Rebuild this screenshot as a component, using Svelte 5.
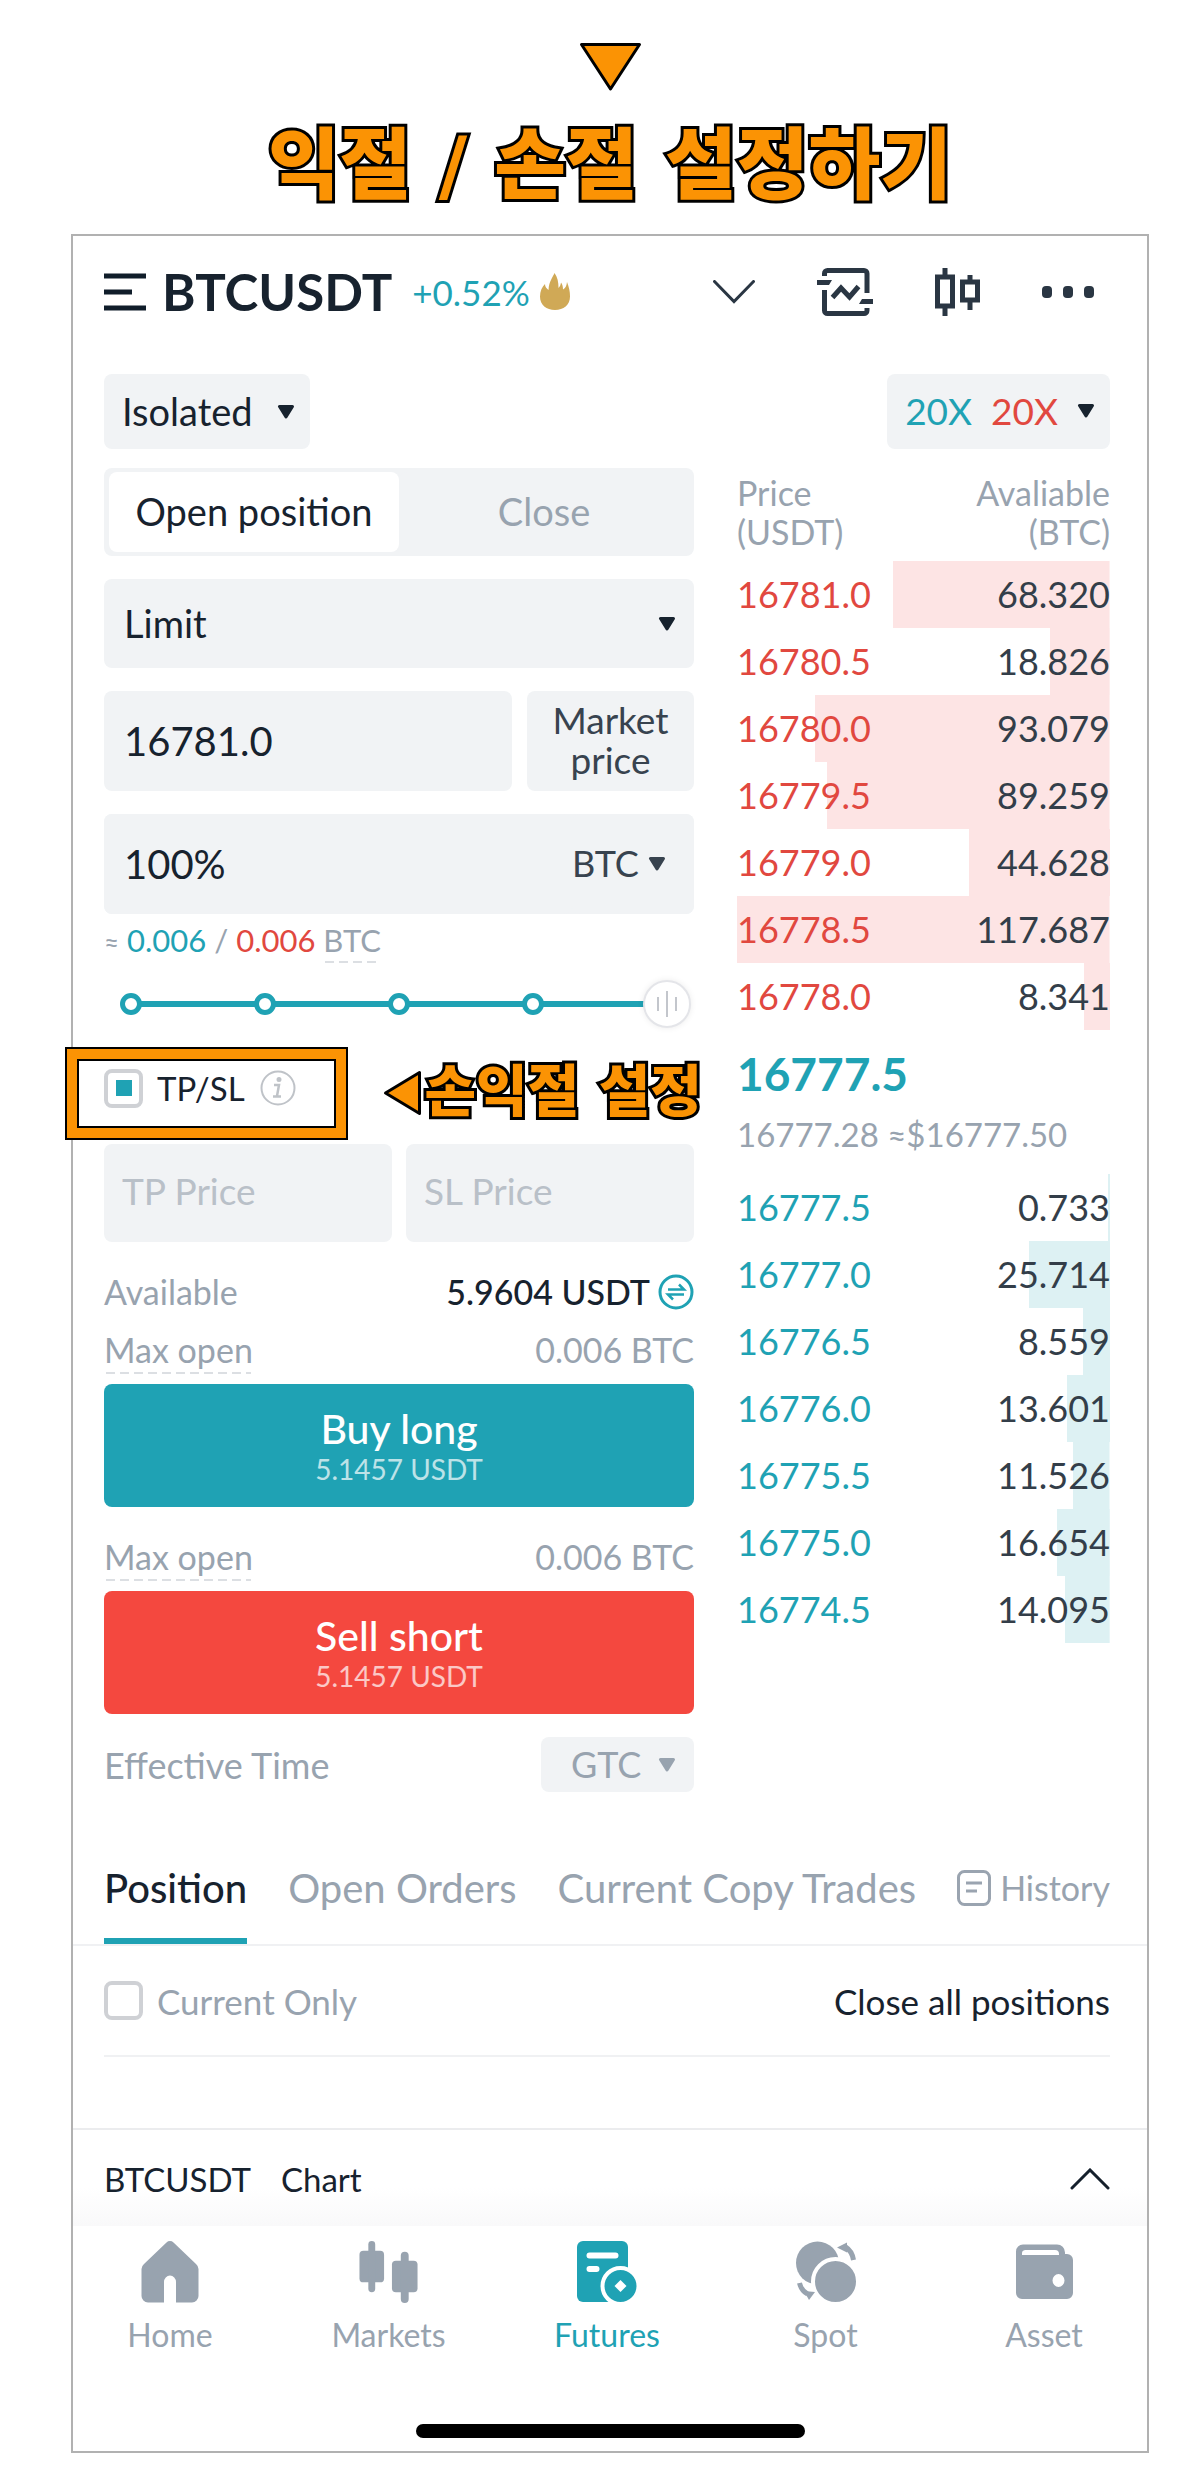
<script lang="ts">
  type Level = { price: string; amount: string };

  const asks: Level[] = [
    { price: "16781.0", amount: "68.320" },
    { price: "16780.5", amount: "18.826" },
    { price: "16780.0", amount: "93.079" },
    { price: "16779.5", amount: "89.259" },
    { price: "16779.0", amount: "44.628" },
    { price: "16778.5", amount: "117.687" },
    { price: "16778.0", amount: "8.341" },
  ];
  const bids: Level[] = [
    { price: "16777.5", amount: "0.733" },
    { price: "16777.0", amount: "25.714" },
    { price: "16776.5", amount: "8.559" },
    { price: "16776.0", amount: "13.601" },
    { price: "16775.5", amount: "11.526" },
    { price: "16775.0", amount: "16.654" },
    { price: "16774.5", amount: "14.095" },
  ];
  const maxAmount = Math.max(...[...asks, ...bids].map((l) => Number(l.amount)));
  const depth = (l: Level) => (Number(l.amount) / maxAmount) * 100;

  let price = $state("16781.0");
  let amount = $state("100%");
  let percent = $state(100);
  let tpsl = $state(true);
  let currentOnly = $state(false);
  let side = $state("open");
</script>

{#snippet caret()}
  <svg class="caret" viewBox="0 0 18 14" aria-hidden="true">
    <path d="M2.5 1.5h13L9 12z" fill="currentColor" stroke="currentColor" stroke-width="3" stroke-linejoin="round" />
  </svg>
{/snippet}

{#snippet levels(rows: Level[], kind: string)}
  <tbody class={kind}>
    {#each rows as level}
      <tr style="--depth: {depth(level)}%">
        <td class="price">{level.price}</td>
        <td class="amount">{level.amount}</td>
      </tr>
    {/each}
  </tbody>
{/snippet}

<main>
  <header class="title">
    <svg width="63" height="50" viewBox="0 0 63 50" aria-hidden="true">
      <path d="M2.5 2.5h58L31.500 47z" fill="#fb9304" stroke="#000" stroke-width="3" stroke-linejoin="round" />
    </svg>
    <h1 class="outlined">익절 / 손절 설정하기</h1>
  </header>

  <section class="phone">
    <div class="topbar">
      <button class="plain" aria-label="Menu">
        <svg width="42" height="38" viewBox="0 0 42 38">
          <path d="M0 3h42M0 19h28M0 35h42" stroke="#101d2a" stroke-width="5" />
        </svg>
      </button>
      <h2>BTCUSDT</h2>
      <span class="change">+0.52%</span>
      <svg width="30" height="38" viewBox="0 0 30 38" aria-hidden="true">
        <path d="M14.500 0C13 4 9 8 8.500 17 6.500 15.500 5 14 5 11 2 14 0 18 0 23.500 0 32 6.500 37 15 37s15-5 15-13.500c0-5-1-9.500-3-14.500-.5 4-1.500 6-4 7.500 0-3-.5-5-2-7-.5 2.500-1 4-2.500 5.500C18.500 9 17.500 4 14.500 0z" fill="#d0a956" />
      </svg>
      <div class="tools">
        <button class="plain" aria-label="Expand">
          <svg width="42" height="24" viewBox="0 0 42 24">
            <path d="M1.500 1.500L21 21.500 40.500 1.500" fill="none" stroke="#2a3643" stroke-width="3" stroke-linecap="round" />
          </svg>
        </button>
        <button class="plain" aria-label="Chart">
          <svg width="56" height="48" viewBox="0 0 56 48">
            <g fill="none" stroke="#2a3643" stroke-width="5">
              <path d="M7.500 8V5.500a3 3 0 013-3H47a3 3 0 013 3V25" />
              <path d="M7.500 22v20.500a3 3 0 003 3H47a3 3 0 003-3V40" />
              <path d="M15.500 29.500L24 20l8.500 9L41.500 18.500" />
            </g>
            <path d="M0 12h15l-3 5H0zM56 31H45l-3 5h14z" fill="#2a3643" />
          </svg>
        </button>
        <button class="plain" aria-label="Candles">
          <svg width="45" height="48" viewBox="0 0 45 48">
            <path d="M2.500 9h15v29h-15zM10 0v8M10 39v9M27.500 14h15v18h-15zM35 7v6M35 33v9" fill="none" stroke="#2a3643" stroke-width="5" />
          </svg>
        </button>
        <button class="plain" aria-label="More">
          <svg width="52" height="12" viewBox="0 0 52 12" fill="#2a3643">
            <rect width="10" height="12" rx="4" /><rect x="21" width="10" height="12" rx="4" /><rect x="42" width="10" height="12" rx="4" />
          </svg>
        </button>
      </div>
    </div>

    <div class="modes">
      <div class="select mode">
        <select aria-label="Margin mode"><option>Isolated</option><option>Cross</option></select>
        {@render caret()}
      </div>
      <button class="leverage">
        <span class="long">20X</span>
        <span class="short">20X</span>
        {@render caret()}
      </button>
    </div>

    <div class="trade">
      <form class="order" onsubmit={(e) => e.preventDefault()}>
        <div class="sides">
          <button type="button" class:active={side === "open"} onclick={() => (side = "open")}>Open position</button>
          <button type="button" class:active={side === "close"} onclick={() => (side = "close")}>Close</button>
        </div>
        <div class="select type">
          <select aria-label="Order type"><option>Limit</option><option>Market</option></select>
          {@render caret()}
        </div>
        <div class="price-row">
          <input type="text" aria-label="Price" bind:value={price} />
          <button type="button">Market price</button>
        </div>
        <div class="amount-row">
          <input type="text" aria-label="Amount" bind:value={amount} />
          <div class="select unit">
            <select aria-label="Unit"><option>BTC</option><option>USDT</option></select>
            {@render caret()}
          </div>
        </div>

        <p class="approx">
          <small>≈</small> <span class="long">0.006</span> / <span class="short">0.006</span>
          <span class="hint">BTC</span>
        </p>

        <div class="slider">
          <input type="range" aria-label="Percent of balance" min="0" max="100" bind:value={percent} />
          <div class="ticks"><i></i><i></i><i></i><i></i><b></b></div>
        </div>

        <div class="tpsl">
          <label>
            <input type="checkbox" bind:checked={tpsl} />
            TP/SL
          </label>
          <button type="button" class="plain" aria-label="About TP/SL">
            <svg width="36" height="36" viewBox="0 0 36 36" fill="none" stroke="#bfc3c8" stroke-width="2">
              <circle cx="18" cy="18" r="16.500" />
              <circle cx="19" cy="9.500" r="1.500" fill="#bfc3c8" />
              <path d="M14 15h5l-2 11M13 26.500h8" stroke-width="2.500" />
            </svg>
          </button>
          <div class="callout"></div>
          <svg class="pointer" width="39" height="46" viewBox="0 0 39 46" aria-hidden="true">
            <path d="M2.500 23L36.500 2.500v41z" fill="#fb9304" stroke="#000" stroke-width="3" stroke-linejoin="round" />
          </svg>
          <strong class="outlined">손익절 설정</strong>
        </div>

        <div class="targets">
          <input type="text" aria-label="TP Price" placeholder="TP Price" />
          <input type="text" aria-label="SL Price" placeholder="SL Price" />
        </div>

        <div class="line">
          <span>Available</span>
          <span class="balance">5.9604 USDT
            <button type="button" class="plain" aria-label="Transfer">
              <svg width="36" height="36" viewBox="0 0 36 36" fill="none" stroke="#1fa2b4" stroke-width="3">
                <circle cx="18" cy="18" r="16" />
                <path d="M10 15.500h16l-5-5M26 20.500H10l5 5" stroke-width="2.500" />
              </svg>
            </button>
          </span>
        </div>
        <div class="line max"><span class="hint">Max open</span><span>0.006 BTC</span></div>
        <button class="submit buy">Buy long<small>5.1457 USDT</small></button>
        <div class="line max second"><span class="hint">Max open</span><span>0.006 BTC</span></div>
        <button class="submit sell">Sell short<small>5.1457 USDT</small></button>
        <div class="line effective">
          <label for="tif">Effective Time</label>
          <div class="select tif">
            <select id="tif"><option>GTC</option><option>IOC</option><option>FOK</option></select>
            {@render caret()}
          </div>
        </div>
      </form>

      <div class="book">
        <table>
          <thead>
            <tr><th>Price<br />(USDT)</th><th class="amount">Avaliable<br />(BTC)</th></tr>
          </thead>
          {@render levels(asks, "asks")}
          <tbody>
            <tr>
              <td colspan="2" class="last">
                <strong>16777.5</strong>
                <span>16777.28 ≈$16777.50</span>
              </td>
            </tr>
          </tbody>
          {@render levels(bids, "bids")}
        </table>
      </div>
    </div>

    <div class="tabs">
      <a href="#position" class="current">Position</a>
      <a href="#orders">Open Orders</a>
      <a href="#copy">Current Copy Trades</a>
      <a href="#history" class="history">
        <svg width="34" height="36" viewBox="0 0 34 36" fill="none" stroke="#9aa4b0" stroke-width="3">
          <rect x="1.500" y="1.500" width="31" height="33" rx="6" />
          <path d="M9 13h16M9 21h11" />
        </svg>
        History
      </a>
    </div>

    <div class="filter">
      <label>
        <input type="checkbox" bind:checked={currentOnly} />
        Current Only
      </label>
      <button class="plain">Close all positions</button>
    </div>

    <button class="chart-bar">
      <span>BTCUSDT</span><span>Chart</span>
      <svg width="40" height="22" viewBox="0 0 40 22" aria-hidden="true">
        <path d="M2 20L20 2l18 18" fill="none" stroke="#15202c" stroke-width="3" stroke-linecap="round" />
      </svg>
    </button>

    <nav>
      <a href="#home">
        <svg width="58" height="62" viewBox="0 0 58 62" fill="currentColor">
          <path d="M25.500 1.500a5 5 0 017 0L55 23a7 7 0 012.500 5V55a6.500 6.500 0 01-6.500 6.500H35V41a6 6.500 0 00-12 0v20.500H7A6.500 6.500 0 01.500 55V28a7 7 0 012.500-5z" />
        </svg>
        Home
      </a>
      <a href="#markets">
        <svg width="59" height="62" viewBox="0 0 59 63" fill="currentColor">
          <rect y="10" width="25" height="32" rx="4" /><rect x="9" width="7" height="52" rx="3.500" />
          <rect x="33" y="20" width="26" height="32" rx="4" /><rect x="42" y="11" width="8" height="52" rx="4" />
        </svg>
        Markets
      </a>
      <a href="#futures" class="current">
        <svg width="60" height="62" viewBox="0 0 60 62" fill="currentColor">
          <rect width="51" height="61" rx="6" />
          <path d="M12.500 14.500h26M12.500 28h7" stroke="#fff" stroke-width="6" stroke-linecap="round" />
          <circle cx="43.500" cy="45" r="18" stroke="#fff" stroke-width="4" />
          <path d="M43.500 39l6 6-6 6-6-6z" fill="#fff" />
        </svg>
        Futures
      </a>
      <a href="#spot">
        <svg width="60" height="62" viewBox="0 0 60 62" fill="currentColor">
          <circle cx="21.500" cy="22" r="21.500" />
          <circle cx="39.500" cy="40.500" r="22.500" stroke="#fff" stroke-width="4" />
          <path d="M49.500 6q6.500 4 8 13M3.500 42q2 8 8 11" fill="none" stroke="currentColor" stroke-width="5" />
          <path d="M41 6.500l10-5v10zM19 51l-6 8-5-9z" />
        </svg>
        Spot
      </a>
      <a href="#asset">
        <svg width="57" height="62" viewBox="0 0 57 62" fill="currentColor">
          <path fill-rule="evenodd" d="M7 3.500h34a8 8 0 018 8v1.500h2a6 6 0 016 6v33a6 6 0 01-6 6H6a6 6 0 01-6-6V10.500a7 7 0 017-7zM6 14h37v-1a4 4 0 00-4-4H9a3.500 3.500 0 00-3 3.500zM42.500 33a6 6.500 0 100 13 6 6.500 0 000-13z" />
        </svg>
        Asset
      </a>
    </nav>
    <div class="home-indicator"></div>
  </section>
</main>

<style>
  :global(body) {
    margin: 0;
    background: #fff;
  }
  main {
    --ink: #17222e;
    --muted: #98a3af;
    --field: #f1f3f5;
    --teal: #1fa2b4;
    --red: #e1483f;
    padding: 42px 54px 30px 71px;
    color: var(--ink);
    font-family: Lato, "Noto Sans CJK KR", sans-serif;
    font-size: 34px;
    line-height: 40px;
  }
  main *,
  main *::before {
    box-sizing: border-box;
  }
  button,
  input,
  select {
    margin: 0;
    padding: 0;
    border: none;
    border-radius: 8px;
    color: inherit;
    font: inherit;
    background: var(--field);
    appearance: none;
    min-width: 0;
  }
  button {
    cursor: pointer;
  }
  select {
    padding-bottom: 2px;
  }
  svg {
    display: block;
    flex: none;
  }
  a {
    color: inherit;
    text-decoration: none;
  }
  .plain {
    flex: none;
    background: none;
  }
  .long {
    color: var(--teal);
  }
  .short {
    color: var(--red);
  }
  .outlined {
    margin: 0;
    color: #fb9304;
    font-family: "DejaVu Sans", "Noto Sans CJK KR", sans-serif;
    font-weight: 900;
    white-space: nowrap;
    -webkit-text-stroke: 6px #000;
    paint-order: stroke fill;
  }

  .title {
    display: flex;
    flex-direction: column;
    align-items: center;
    height: 192px;
  }
  .title h1 {
    margin-top: 24px;
    font-size: 78px;
    line-height: 100px;
  }

  .phone {
    border: 2px solid #b1b1b1;
  }
  .topbar {
    display: flex;
    align-items: center;
    padding: 26px 53px 0 31px;
    height: 86px;
  }
  .topbar h2 {
    margin: 0 20px 0 16px;
    font-size: 51px;
    font-weight: 700;
  }
  .change {
    margin-right: 10px;
    color: var(--teal);
    font-size: 35px;
  }
  .tools {
    display: flex;
    flex: 1;
    align-items: center;
    justify-content: flex-end;
    gap: 62px;
  }

  .select {
    position: relative;
    display: flex;
  }
  .select select {
    flex: 1;
  }
  .select .caret {
    position: absolute;
    top: 50%;
    right: 18px;
    margin-top: -7px;
    pointer-events: none;
  }
  .caret {
    width: 18px;
    height: 14px;
  }
  .modes {
    display: flex;
    justify-content: space-between;
    padding: 52px 37px 19px 31px;
  }
  .mode {
    width: 206px;
    height: 75px;
  }
  .mode select {
    padding-left: 18px;
    font-size: 38px;
  }
  .mode .caret {
    right: 15px;
  }
  .leverage {
    display: flex;
    align-items: center;
    gap: 19px;
    padding: 0 15px 2px 18px;
    font-size: 37px;
  }

  .trade {
    display: grid;
    grid-template-columns: minmax(0, 590fr) minmax(0, 373fr);
    gap: 43px;
    padding: 0 37px 0 31px;
  }
  .sides {
    display: flex;
    height: 88px;
    padding: 4px 5px;
    border-radius: 8px;
    background: var(--field);
  }
  .sides button {
    flex: 1;
    padding-bottom: 2px;
    color: var(--muted);
    font-size: 38px;
  }
  .sides .active {
    color: var(--ink);
    background: #fff;
  }
  .type {
    height: 89px;
    margin: 23px 0;
  }
  .type select {
    padding-left: 20px;
    font-size: 38px;
  }
  .price-row {
    display: grid;
    grid-template-columns: minmax(0, 408fr) minmax(0, 167fr);
    gap: 15px;
    height: 100px;
  }
  .price-row input,
  .amount-row input {
    padding-left: 20px;
    font-size: 40px;
  }
  .price-row button {
    padding: 0 20px 2px;
    color: #38434f;
    font-size: 37px;
  }
  .amount-row {
    display: flex;
    height: 100px;
    margin-top: 23px;
    border-radius: 8px;
    background: var(--field);
  }
  .amount-row input {
    flex: 1;
  }
  .unit {
    width: 122px;
    color: #38434f;
  }
  .unit select {
    font-size: 36px;
  }
  .unit .caret {
    right: 28px;
  }
  .approx {
    margin: 6px 0 0;
    color: var(--muted);
    font-size: 31px;
  }
  .approx small {
    font-size: 26px;
  }
  .hint {
    position: relative;
  }
  .hint::before {
    content: "";
    position: absolute;
    left: 2px;
    right: 2px;
    bottom: -4px;
    height: 2px;
    background: repeating-linear-gradient(90deg, #dcdfe3 0 9px, transparent 9px 14px);
  }

  .slider {
    position: relative;
    height: 48px;
    margin: 18px 3px 0;
  }
  .slider input {
    display: block;
    width: 100%;
    height: 48px;
    background: linear-gradient(var(--teal), var(--teal)) center / calc(100% - 48px) 6px no-repeat;
  }
  .slider input::-webkit-slider-thumb {
    appearance: none;
    width: 48px;
    height: 48px;
    border: 2px solid #e4e5e9;
    border-radius: 50%;
    background:
      linear-gradient(#c3c6cc, #c3c6cc) 12px center / 2px 14px no-repeat,
      linear-gradient(#c3c6cc, #c3c6cc) center / 2px 26px no-repeat,
      linear-gradient(#c3c6cc, #c3c6cc) 30px center / 2px 14px no-repeat,
      #fff;
    box-shadow: 0 0 6px rgba(0, 0, 0, 0.08);
  }
  .ticks {
    position: absolute;
    inset: 13px;
    display: flex;
    justify-content: space-between;
    pointer-events: none;
  }
  .ticks > * {
    width: 22px;
    height: 22px;
  }
  .ticks i {
    border: 5px solid var(--teal);
    border-radius: 50%;
    background: #fff;
  }

  .tpsl {
    position: relative;
    display: flex;
    align-items: center;
    height: 48px;
    margin-top: 36px;
    font-size: 33px;
  }
  .tpsl label,
  .filter label {
    display: flex;
    align-items: center;
    gap: 14px;
  }
  .tpsl label {
    flex: none;
    margin-right: 15px;
  }
  input[type="checkbox"] {
    width: 39px;
    height: 39px;
    border: 4px solid #cfd1d5;
    background: #fff;
  }
  input[type="checkbox"]:checked {
    background: linear-gradient(var(--teal), var(--teal)) center / 16px 16px no-repeat #fff;
  }
  .callout {
    position: absolute;
    top: -17px;
    left: -39px;
    width: 283px;
    height: 93px;
    border: 2px solid #000;
    box-shadow:
      inset 0 0 0 10px #fb9304,
      inset 0 0 0 12px #000;
    pointer-events: none;
  }
  .pointer {
    margin: 10px 3px 0 87px;
  }
  .tpsl strong {
    margin-top: 8px;
    font-size: 56px;
  }
  .targets {
    display: grid;
    grid-template-columns: 1fr 1fr;
    gap: 14px;
    height: 98px;
    margin: 32px 0 30px;
  }
  .targets input {
    padding: 0 0 4px 18px;
    font-size: 37px;
  }
  .targets input::placeholder {
    color: #b9c0c8;
    opacity: 1;
  }

  .line {
    display: flex;
    align-items: center;
    justify-content: space-between;
    color: var(--muted);
  }
  .balance {
    display: flex;
    align-items: center;
    gap: 8px;
    color: var(--ink);
    font-weight: 500;
  }
  .max {
    margin: 18px 0 14px;
  }
  .max.second {
    margin-top: 30px;
  }
  .submit {
    display: flex;
    flex-direction: column;
    align-items: center;
    justify-content: center;
    width: 100%;
    height: 123px;
    padding-top: 2px;
    color: #fff;
    font-size: 41px;
    font-weight: 500;
    line-height: 44px;
  }
  .submit small {
    font-size: 28px;
    font-weight: 400;
    line-height: 36px;
    opacity: 0.7;
  }
  .buy {
    background: var(--teal);
  }
  .sell {
    background: #f4483f;
  }
  .effective {
    height: 55px;
    margin-top: 23px;
    font-size: 36px;
  }
  .tif {
    width: 153px;
    height: 55px;
  }
  .tif select {
    padding-left: 30px;
  }

  table {
    width: 100%;
    border-collapse: collapse;
    font-size: 36px;
  }
  th {
    padding: 5px 0 10px;
    color: var(--muted);
    font-size: 34px;
    font-weight: 400;
    line-height: 39px;
    text-align: left;
  }
  td {
    height: 67px;
    padding: 0 0 2px;
  }
  .amount {
    text-align: right;
  }
  td.amount {
    color: #333e49;
  }
  .asks .price {
    color: var(--red);
  }
  .bids .price {
    color: var(--teal);
  }
  .asks tr {
    background: linear-gradient(#fde4e4, #fde4e4) right / var(--depth) 100% no-repeat;
  }
  .bids tr {
    background: linear-gradient(#ddf1f3, #ddf1f3) right / var(--depth) 100% no-repeat;
  }
  td.last {
    height: 144px;
    padding-top: 6px;
    white-space: nowrap;
  }
  .last strong {
    display: block;
    color: var(--teal);
    font-size: 46px;
    line-height: 60px;
  }
  .last span {
    color: var(--muted);
    font-size: 33px;
    line-height: 60px;
  }

  .tabs {
    display: flex;
    justify-content: space-between;
    height: 115px;
    margin-top: 39px;
    padding: 0 37px 0 31px;
    border-bottom: 2px solid #f0f1f3;
    color: var(--muted);
    font-size: 40px;
    line-height: 115px;
    white-space: nowrap;
  }
  .tabs .current {
    border-bottom: 6px solid var(--teal);
    color: var(--ink);
    font-weight: 500;
  }
  .history {
    display: flex;
    align-items: center;
    gap: 9px;
    font-size: 34px;
  }
  .filter {
    display: flex;
    align-items: center;
    justify-content: space-between;
    height: 111px;
    margin: 0 37px 71px 31px;
    border-bottom: 2px solid #f0f1f3;
    font-size: 35px;
  }
  .filter label {
    color: var(--muted);
  }
  .chart-bar {
    display: flex;
    align-items: center;
    gap: 30px;
    width: 100%;
    height: 98px;
    padding: 2px 37px 0 31px;
    border-top: 2px solid #ebecee;
    border-radius: 0;
    background: linear-gradient(#fff 60%, #f9f9fa);
    font-size: 33px;
  }
  .chart-bar svg {
    margin-left: auto;
  }
  nav {
    display: flex;
    justify-content: space-between;
    padding: 15px 37px 0 31px;
    color: var(--muted);
    font-size: 32px;
  }
  nav a {
    display: flex;
    flex-direction: column;
    align-items: center;
    gap: 12px;
    width: 132px;
  }
  nav .current {
    color: var(--teal);
  }
  .home-indicator {
    width: 389px;
    height: 14px;
    margin: 69px auto 13px;
    border-radius: 7px;
    background: #000;
  }
</style>
